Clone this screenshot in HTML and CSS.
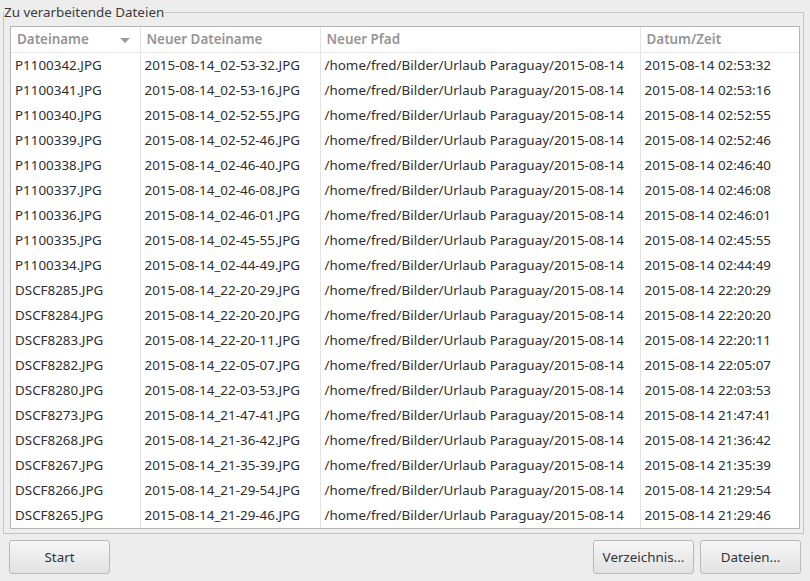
FILE: index.html
```html
<!DOCTYPE html>
<html lang="de">
<head>
    <meta charset="UTF-8">
    <title>Dateien umbenennen</title>
    <link rel="stylesheet" href="styles.css">
</head>
<body>
    <div class="window">
        <fieldset class="group">
            <legend>Zu verarbeitende Dateien</legend>
            <div class="list">
                <table class="files">
                    <colgroup>
                        <col class="c-name">
                        <col class="c-new">
                        <col class="c-path">
                        <col class="c-date">
                    </colgroup>
                    <thead>
                        <tr>
                            <th class="sorted">Dateiname <span class="arrow"></span></th>
                            <th>Neuer Dateiname</th>
                            <th>Neuer Pfad</th>
                            <th>Datum/Zeit</th>
                        </tr>
                    </thead>
                    <tbody id="rows"></tbody>
                </table>
            </div>
        </fieldset>

        <div class="buttons">
            <button>Start</button>
            <div class="spacer"></div>
            <button>Verzeichnis...</button>
            <button>Dateien...</button>
        </div>
    </div>

    <script>
        const files = [
            ["P1100342.JPG", "02:53:32"],
            ["P1100341.JPG", "02:53:16"],
            ["P1100340.JPG", "02:52:55"],
            ["P1100339.JPG", "02:52:46"],
            ["P1100338.JPG", "02:46:40"],
            ["P1100337.JPG", "02:46:08"],
            ["P1100336.JPG", "02:46:01"],
            ["P1100335.JPG", "02:45:55"],
            ["P1100334.JPG", "02:44:49"],
            ["DSCF8285.JPG", "22:20:29"],
            ["DSCF8284.JPG", "22:20:20"],
            ["DSCF8283.JPG", "22:20:11"],
            ["DSCF8282.JPG", "22:05:07"],
            ["DSCF8280.JPG", "22:03:53"],
            ["DSCF8273.JPG", "21:47:41"],
            ["DSCF8268.JPG", "21:36:42"],
            ["DSCF8267.JPG", "21:35:39"],
            ["DSCF8266.JPG", "21:29:54"],
            ["DSCF8265.JPG", "21:29:46"]
        ];

        const rows = document.getElementById("rows");
        files.forEach(([name, time]) => {
            const tr = document.createElement("tr");
            const day = "2015-08-14";
            const cells = [
                name,
                day + "_" + time.replace(/:/g, "-") + ".JPG",
                "/home/fred/Bilder/Urlaub Paraguay/" + day,
                day + " " + time
            ];
            cells.forEach(text => {
                const td = document.createElement("td");
                td.textContent = text;
                tr.appendChild(td);
            });
            rows.appendChild(tr);
        });
    </script>
</body>
</html>
```

FILE: styles.css
```css
body {
    margin: 0;
    background-color: #ededed;
    font-family: 'Noto Sans', 'Open Sans', sans-serif;
    font-size: 13.4px;
    color: #2e2e2e;
}
.window {
    width: 810px;
    height: 581px;
    box-sizing: border-box;
    padding: 3px 6px 0 3px;
}
.group {
    margin: 0;
    padding: 0 3px 4px 6px;
    border: 1px solid #c4c4c4;
}
.group legend {
    margin-left: -6px;
    padding: 0 1px 0 0;
    line-height: 18px;
    color: #3a3a3a;
}
.list {
    margin-top: 5px;
    background: white;
    border: 1px solid #b4b4b4;
}
.files {
    width: 100%;
    border-collapse: collapse;
    table-layout: fixed;
}
.c-name { width: 129px; }
.c-new { width: 180px; }
.c-path { width: 320px; }
.c-date { width: auto; }
th, td {
    text-align: left;
    white-space: nowrap;
    overflow: hidden;
    border-left: 1px solid #e3e3e3;
    padding: 0 4px;
}
th:first-child, td:first-child {
    border-left: none;
}
td {
    height: 25px;
    line-height: 25px;
}
th {
    font-weight: 600;
    color: #959595;
    border-bottom: 1px solid #e6e6e6;
    height: 25px;
    line-height: 25px;
    padding-left: 6px;
}
.sorted {
    position: relative;
}
.arrow {
    position: absolute;
    right: 10px;
    top: 11px;
    width: 0;
    height: 0;
    border-left: 5px solid transparent;
    border-right: 5px solid transparent;
    border-top: 5px solid #9a9a9a;
}
.buttons {
    display: flex;
    gap: 6px;
    margin-top: 6px;
    padding: 0 3px 0 6px;
}
.spacer {
    flex: 1;
}
button {
    font-family: 'Noto Sans', 'Open Sans', sans-serif;
    font-size: 13.4px;
    color: #333;
    width: 101px;
    height: 34px;
    background: linear-gradient(#f6f6f6, #e2e2e2);
    border: 1px solid #b9b9b9;
    border-radius: 3px;
    padding: 0;
}
```
